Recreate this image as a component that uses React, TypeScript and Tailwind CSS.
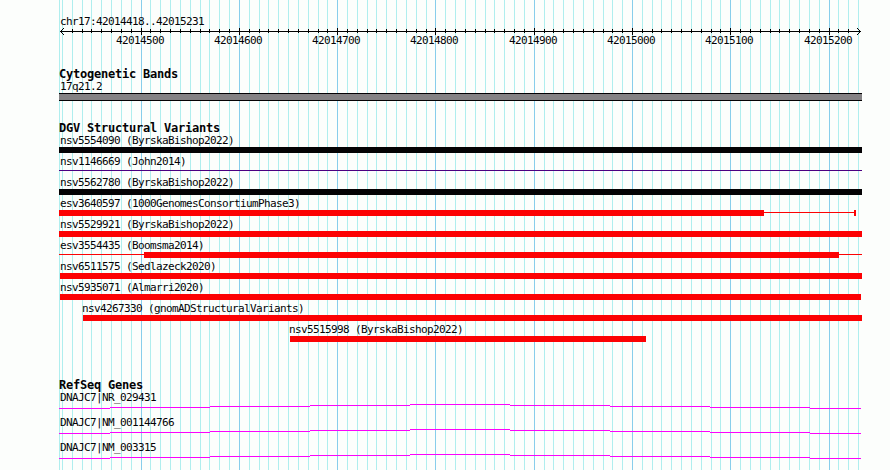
const ORIGIN = 59;
const FIRST_MAJOR = 141.1;
const STEP = 9.828;

type Grid = { x: number; major: boolean; value: number };

const grid: Grid[] = Array.from({ length: 82 }, (_, i) => {
  const k = i - 8;
  return {
    x: Math.floor(FIRST_MAJOR + k * STEP) - ORIGIN,
    major: k % 10 === 0,
    value: 42014500 + k * 10,
  };
});

type Variant = {
  label: string;
  labelX?: number;
  start: number;
  end: number;
  kind: "black" | "red" | "thin";
  line?: [number, number];
  cap?: number;
};

const variants: Variant[] = [
  { label: "nsv5554090 (ByrskaBishop2022)", start: 59, end: 862, kind: "black" },
  { label: "nsv1146669 (John2014)", start: 59, end: 862, kind: "thin" },
  { label: "nsv5562780 (ByrskaBishop2022)", start: 59, end: 862, kind: "black" },
  { label: "esv3640597 (1000GenomesConsortiumPhase3)", start: 59, end: 764, kind: "red", line: [59, 856], cap: 854 },
  { label: "nsv5529921 (ByrskaBishop2022)", start: 59, end: 862, kind: "red" },
  { label: "esv3554435 (Boomsma2014)", start: 144, end: 839, kind: "red", line: [59, 862] },
  { label: "nsv6511575 (Sedlazeck2020)", start: 60, end: 862, kind: "red" },
  { label: "nsv5935071 (Almarri2020)", start: 60, end: 861, kind: "red" },
  { label: "nsv4267330 (gnomADStructuralVariants)", labelX: 82, start: 83, end: 862, kind: "red" },
  { label: "nsv5515998 (ByrskaBishop2022)", labelX: 289, start: 290, end: 646, kind: "red" },
];

const genes = ["DNAJC7|NR_029431", "DNAJC7|NM_001144766", "DNAJC7|NM_003315"];

const intron = [
  { w: 51, y: 4 },
  { w: 100, y: 3 },
  { w: 100, y: 2 },
  { w: 100, y: 1 },
  { w: 100, y: 0 },
  { w: 100, y: 1 },
  { w: 100, y: 2 },
  { w: 100, y: 3 },
  { w: 51, y: 4 },
];

const barStyle = {
  black: "h-[6px] bg-[#040204]",
  red: "h-[6px] bg-[#fc0204]",
  thin: "mt-[2px] h-px bg-[#4b0082]",
};

function Label({ text, x = 60 }: { text: string; x?: number }) {
  return (
    <div
      className="h-[13px] whitespace-pre text-[11px] leading-[13px] tracking-[-0.622px]"
      style={{ paddingLeft: x - ORIGIN }}
    >
      {text}
    </div>
  );
}

function Title({ text }: { text: string }) {
  return (
    <h2 className="h-[13px] whitespace-pre text-[12px] font-bold leading-[14px] tracking-[-0.224px]">
      {text}
    </h2>
  );
}

function GridLines() {
  return (
    <div className="absolute inset-0">
      <div className="absolute inset-y-0 left-0 w-px bg-[#afeeee]" />
      {grid.map((g) => (
        <div
          key={g.value}
          className={g.major ? "absolute inset-y-0 w-px bg-[#87ceeb]" : "absolute inset-y-0 w-px bg-[#afeeee]"}
          style={{ left: g.x }}
        />
      ))}
    </div>
  );
}

function Axis() {
  return (
    <div>
      <svg width="803" height="7" className="block" shapeRendering="crispEdges">
        <rect x="1" y="3" width="801" height="1" />
        {grid.slice(1, 81).map((g) => (
          <rect key={g.value} x={g.x} y={g.major ? 0 : 1} width="1" height={g.major ? 7 : 4} />
        ))}
        {[1, 2, 3].map((d) => (
          <g key={d}>
            <rect x={1 + d} y={3 - d} width="1" height="1" />
            <rect x={1 + d} y={3 + d} width="1" height="1" />
            <rect x={801 - d} y={3 - d} width="1" height="1" />
            <rect x={801 - d} y={3 + d} width="1" height="1" />
          </g>
        ))}
      </svg>
      <div className="-mt-px flex h-[13px] pl-[57px] text-[11px] leading-[13px] tracking-[-0.622px]">
        {grid
          .filter((g) => g.major)
          .map((g, i, all) => (
            <span
              key={g.value}
              className="shrink-0"
              style={{ width: i + 1 < all.length ? all[i + 1].x - g.x : 50 }}
            >
              {g.value}
            </span>
          ))}
      </div>
    </div>
  );
}

function VariantRow({ v }: { v: Variant }) {
  return (
    <div className="h-[21px]">
      <Label text={v.label} x={v.labelX} />
      <div className="relative h-[6px]">
        {v.line && (
          <div
            className="absolute top-[2px] h-px bg-[#fc0204]"
            style={{ left: v.line[0] - ORIGIN, width: v.line[1] - v.line[0] }}
          />
        )}
        {v.cap && (
          <div className="absolute top-0 h-[6px] w-[2px] bg-[#fc0204]" style={{ left: v.cap - ORIGIN }} />
        )}
        <div className="flex">
          <div className={barStyle[v.kind]} style={{ marginLeft: v.start - ORIGIN, width: v.end - v.start }} />
        </div>
      </div>
    </div>
  );
}

export default function App() {
  return (
    <main className="h-[470px] w-[890px] overflow-hidden bg-[#fcfefc] pl-[59px] font-['DejaVu_Sans_Mono',monospace] text-[#040204]">
      <div className="relative h-full w-[803px]">
        <GridLines />
        <div className="relative pt-[15px]">
          <Label text="chr17:42014418..42015231" />
          <Axis />

          <section className="mt-[20px]">
            <Title text="Cytogenetic Bands" />
            <Label text="17q21.2" />
            <div className="h-[8px] border-y border-[#040204] bg-[#848284]" />
          </section>

          <section className="mt-[20px]">
            <Title text="DGV Structural Variants" />
            {variants.map((v) => (
              <VariantRow key={v.label} v={v} />
            ))}
          </section>

          <section className="mt-[34px]">
            <Title text="RefSeq Genes" />
            {genes.map((g) => (
              <div key={g} className="h-[25px]">
                <Label text={g} />
                <div className="flex h-[5px]">
                  {intron.map((s, i) => (
                    <div key={i} className="h-px bg-[#fc02fc]" style={{ width: s.w, marginTop: s.y }} />
                  ))}
                </div>
              </div>
            ))}
          </section>
        </div>
      </div>
    </main>
  );
}
